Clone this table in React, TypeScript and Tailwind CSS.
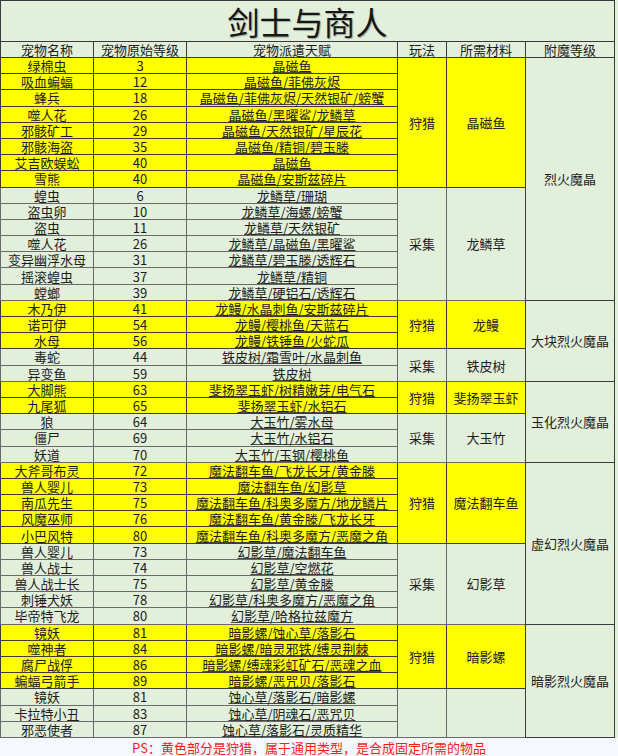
type Row = [string, string, string];
type Group = { tone: 'y' | 'g'; play: string; mat: string; rows: Row[] };

const groups: Group[] = [
  {
    tone: 'y',
    play: '狩猎',
    mat: '晶磁鱼',
    rows: [
      ['绿棉虫', '3', '晶磁鱼'],
      ['吸血蝙蝠', '12', '晶磁鱼/菲佛灰烬'],
      ['蜂兵', '18', '晶磁鱼/菲佛灰烬/天然银矿/螃蟹'],
      ['噬人花', '26', '晶磁鱼/黑曜鲨/龙鳞草'],
      ['邪骸矿工', '29', '晶磁鱼/天然银矿/星辰花'],
      ['邪骸海盗', '35', '晶磁鱼/精铜/碧玉滕'],
      ['艾吉欧蜈蚣', '40', '晶磁鱼'],
      ['雪熊', '40', '晶磁鱼/安斯兹碎片'],
    ],
  },
  {
    tone: 'g',
    play: '采集',
    mat: '龙鳞草',
    rows: [
      ['蝗虫', '6', '龙鳞草/珊瑚'],
      ['盗虫卵', '10', '龙鳞草/海螺/螃蟹'],
      ['盗虫', '11', '龙鳞草/天然银矿'],
      ['噬人花', '26', '龙鳞草/晶磁鱼/黑曜鲨'],
      ['变异幽浮水母', '31', '龙鳞草/碧玉滕/透辉石'],
      ['摇滚蝗虫', '37', '龙鳞草/精铜'],
      ['螳螂', '39', '龙鳞草/硬铝石/透辉石'],
    ],
  },
  {
    tone: 'y',
    play: '狩猎',
    mat: '龙鳗',
    rows: [
      ['木乃伊', '41', '龙鳗/水晶刺鱼/安斯兹碎片'],
      ['诺可伊', '54', '龙鳗/樱桃鱼/天蓝石'],
      ['水母', '56', '龙鳗/铁锤鱼/火蛇瓜'],
    ],
  },
  {
    tone: 'g',
    play: '采集',
    mat: '铁皮树',
    rows: [
      ['毒蛇', '44', '铁皮树/霜雪叶/水晶刺鱼'],
      ['异变鱼', '59', '铁皮树'],
    ],
  },
  {
    tone: 'y',
    play: '狩猎',
    mat: '斐扬翠玉虾',
    rows: [
      ['大脚熊', '63', '斐扬翠玉虾/树精嫩芽/电气石'],
      ['九尾狐', '65', '斐扬翠玉虾/水铝石'],
    ],
  },
  {
    tone: 'g',
    play: '采集',
    mat: '大玉竹',
    rows: [
      ['狼', '64', '大玉竹/雾水母'],
      ['僵尸', '69', '大玉竹/水铝石'],
      ['妖道', '70', '大玉竹/玉钢/樱桃鱼'],
    ],
  },
  {
    tone: 'y',
    play: '狩猎',
    mat: '魔法翻车鱼',
    rows: [
      ['大斧哥布灵', '72', '魔法翻车鱼/飞龙长牙/黄金滕'],
      ['兽人婴儿', '73', '魔法翻车鱼/幻影草'],
      ['南瓜先生', '75', '魔法翻车鱼/科奥多魔方/地龙鳞片'],
      ['风魔巫师', '76', '魔法翻车鱼/黄金滕/飞龙长牙'],
      ['小巴风特', '80', '魔法翻车鱼/科奥多魔方/恶魔之角'],
    ],
  },
  {
    tone: 'g',
    play: '采集',
    mat: '幻影草',
    rows: [
      ['兽人婴儿', '73', '幻影草/魔法翻车鱼'],
      ['兽人战士', '74', '幻影草/空燃花'],
      ['兽人战士长', '75', '幻影草/黄金滕'],
      ['刺锤犬妖', '78', '幻影草/科奥多魔方/恶魔之角'],
      ['毕帝特飞龙', '80', '幻影草/哈格拉兹魔方'],
    ],
  },
  {
    tone: 'y',
    play: '狩猎',
    mat: '暗影螺',
    rows: [
      ['镜妖', '81', '暗影螺/蚀心草/落影石'],
      ['噬神者', '84', '暗影螺/暗灵邪铁/缚灵荆棘'],
      ['腐尸战俘', '86', '暗影螺/缚魂彩虹矿石/恶魂之血'],
      ['蝙蝠弓箭手', '89', '暗影螺/恶咒贝/落影石'],
    ],
  },
  {
    tone: 'g',
    play: '',
    mat: '',
    rows: [
      ['镜妖', '81', '蚀心草/落影石/暗影螺'],
      ['卡拉特小丑', '83', '蚀心草/阴魂石/恶咒贝'],
      ['邪恶使者', '87', '蚀心草/落影石/灵质精华'],
    ],
  },
];

const enchants: [string, number][] = [
  ['烈火魔晶', 15],
  ['大块烈火魔晶', 5],
  ['玉化烈火魔晶', 5],
  ['虚幻烈火魔晶', 10],
  ['暗影烈火魔晶', 7],
];

const enchantAt: Record<number, [string, number]> = {};
let acc = 0;
for (const e of enchants) {
  enchantAt[acc] = e;
  acc += e[1];
}

const cell = 'h-[16.2px] p-0 text-center text-[13px] leading-[15px] whitespace-nowrap border';
const head = 'h-[16px] p-0 text-center text-[13px] leading-[15px] border border-[#3a3a3a] font-normal';

export default function App() {
  let idx = 0;
  const body: JSX.Element[] = [];

  groups.forEach((g) => {
    const bg = g.tone === 'y' ? 'bg-[#ffff00] border-[#3c3c3c]' : 'bg-[#e2efda] border-[#6a6a6a]';
    g.rows.forEach((r, ri) => {
      const en = enchantAt[idx];
      body.push(
        <tr key={idx}>
          <td className={`${cell} ${bg}`}>{r[0]}</td>
          <td className={`${cell} ${bg}`}>{r[1]}</td>
          <td className={`${cell} ${bg}`}>
            <span className="underline decoration-[#4a4a4a] underline-offset-[1px]">{r[2]}</span>
          </td>
          {ri === 0 && (
            <>
              <td rowSpan={g.rows.length} className={`${cell} ${bg}`}>
                {g.play}
              </td>
              <td rowSpan={g.rows.length} className={`${cell} ${bg}`}>
                {g.mat}
              </td>
            </>
          )}
          {en && (
            <td rowSpan={en[1]} className={`${cell} bg-[#e2efda] border-[#3c3c3c]`}>
              {en[0]}
            </td>
          )}
        </tr>,
      );
      idx++;
    });
  });

  return (
    <div className="w-[618px] h-[756px] overflow-hidden bg-[#e2efda] text-[#1c1c1c] font-['Noto_Sans_CJK_SC',sans-serif]">
      <table className="w-[614px] table-fixed border-collapse">
        <colgroup>
          <col className="w-[93px]" />
          <col className="w-[93px]" />
          <col className="w-[211px]" />
          <col className="w-[49px]" />
          <col className="w-[79px]" />
          <col className="w-[89px]" />
        </colgroup>
        <thead>
          <tr>
            <th
              colSpan={6}
              className="h-[41px] p-0 text-center text-[32px] leading-[38px] font-normal border border-[#3a3a3a] bg-[#e2efda] text-[#161616] [text-shadow:1px_1px_1px_rgba(0,0,0,0.3)]"
            >
              剑士与商人
            </th>
          </tr>
          <tr className="bg-[#e2efda]">
            <th className={head}>宠物名称</th>
            <th className={head}>宠物原始等级</th>
            <th className={head}>宠物派遣天赋</th>
            <th className={head}>玩法</th>
            <th className={head}>所需材料</th>
            <th className={head}>附魔等级</th>
          </tr>
        </thead>
        <tbody>{body}</tbody>
      </table>
      <div className="h-[20px] bg-[#f5f9fd] flex items-center justify-center text-[13px] leading-none text-[#ff1a1a]">
        PS：黄色部分是狩猎，属于通用类型，是合成固定所需的物品
      </div>
    </div>
  );
}
